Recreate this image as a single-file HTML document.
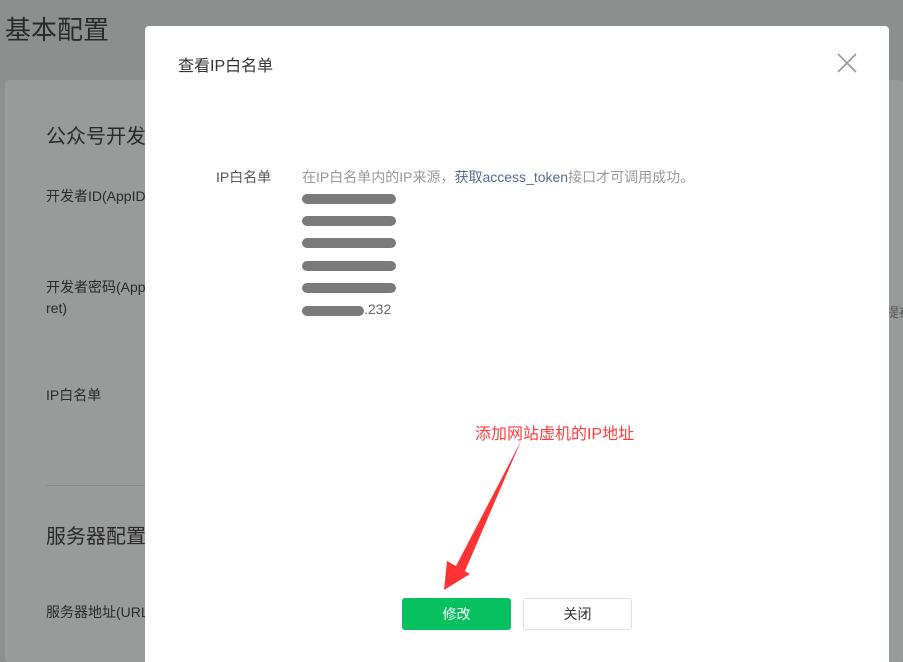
<!DOCTYPE html>
<html><head><meta charset="utf-8"><style>
*{margin:0;padding:0;box-sizing:border-box}
html,body{width:903px;height:662px;overflow:hidden}
body{background:#8d8e8e;font-family:"Liberation Sans","Noto Sans CJK SC",sans-serif;position:relative}
.a{position:absolute;white-space:nowrap}
.card{position:absolute;left:5px;top:80px;width:898px;height:582px;background:#999a9a;border-radius:3px}
.bg{color:#2a2a2a}
.modal{position:absolute;left:145px;top:26px;width:744px;height:636px;background:#fff;border-radius:4px 4px 0 0}
.ip{position:absolute;left:157px;height:10px;background:#7a7a7a;border-radius:5px}
.ipt{position:absolute;left:157px;font-size:14px;color:#666}
</style></head><body>
<div class="a bg" style="left:5px;top:10px;font-size:26px">基本配置</div>
<div class="card"></div>
<div class="a bg" style="left:46px;top:120px;font-size:20px">公众号开发</div>
<div class="a bg" style="left:46px;top:186px;font-size:14px">开发者ID(AppID)</div>
<div class="a bg" style="left:46px;top:277px;font-size:14px">开发者密码(App</div>
<div class="a bg" style="left:46px;top:300px;font-size:14px">ret)</div>
<div class="a bg" style="left:46px;top:385px;font-size:14px">IP白名单</div>
<div class="a" style="left:46px;top:485px;width:110px;height:1px;background:#8a8a8a"></div>
<div class="a bg" style="left:46px;top:520px;font-size:20px">服务器配置</div>
<div class="a bg" style="left:46px;top:602px;font-size:14px">服务器地址(URL)</div>
<div class="a bg" style="left:886px;top:302px;font-size:13px;color:#555">提存</div>
<div class="modal">
 <div class="a" style="left:33px;top:26px;font-size:16px;color:#333">查看IP白名单</div>
 <svg class="a" style="left:691px;top:26px" width="22" height="22" viewBox="0 0 22 22"><path d="M2 2L20 20M20 2L2 20" stroke="#999" stroke-width="1.6"/></svg>
 <div class="a" style="left:71px;top:141px;font-size:14px;color:#555">IP白名单</div>
 <div class="a" style="left:157px;top:141px;font-size:14px;color:#999">在IP白名单内的IP来源，<span style="color:#576b95">获取access_token</span>接口才可调用成功。</div>
 <div class="ip" style="top:168px;width:94px"></div>
 <div class="ip" style="top:190px;width:94px"></div>
 <div class="ip" style="top:212px;width:94px"></div>
 <div class="ip" style="top:235px;width:94px"></div>
 <div class="ip" style="top:257px;width:94px"></div>
 <div class="ip" style="top:280px;width:62px"></div>
 <div class="ipt" style="left:219px;top:275px">.232</div>
 <div class="a" style="left:330px;top:394px;font-size:16px;color:#ff3b3b">添加网站虚机的IP地址</div>
 <div class="a" style="left:257px;top:572px;width:109px;height:32px;background:#07c160;border-radius:3px;color:#fff;font-size:14px;text-align:center;line-height:32px">修改</div>
 <div class="a" style="left:378px;top:572px;width:109px;height:32px;border:1px solid #e0e0e0;border-radius:3px;color:#333;font-size:14px;text-align:center;line-height:30px">关闭</div>
</div>
<svg class="a" style="left:0;top:0" width="903" height="662"><path d="M521 441 L459 568 L465 571 Z" fill="#f33"/><path d="M444 590 L447 561 L470 574 Z" fill="#f33"/><path d="M521 441 L455 568 L463 572Z" fill="#f33"/></svg>
</body></html>
